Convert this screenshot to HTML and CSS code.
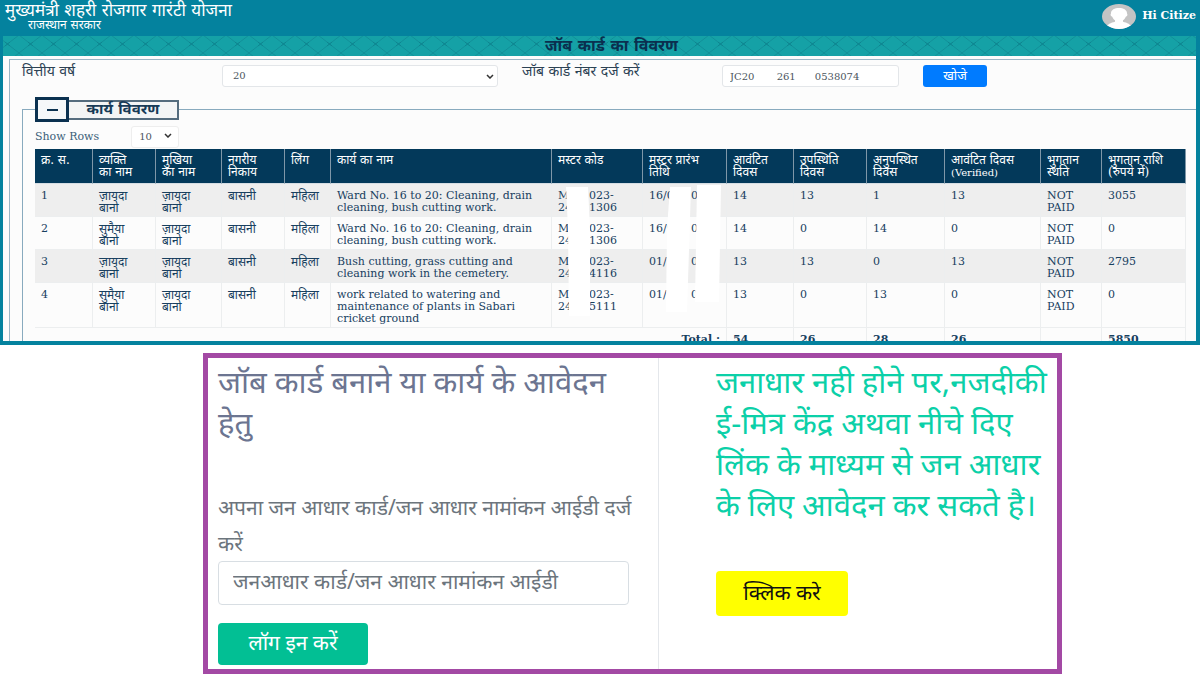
FILE: index.html
```html
<!DOCTYPE html>
<html lang="hi">
<head>
<meta charset="utf-8">
<meta name="viewport" content="width=device-width, initial-scale=1">
<title>जॉब कार्ड का विवरण</title>
<link rel="stylesheet" href="styles.css">
</head>
<body>
<section class="portal">
  <header class="topbar">
    <div class="brand">
      <div class="brand-name">मुख्यमंत्री शहरी रोजगार गारंटी योजना</div>
      <div class="brand-sub">राजस्थान सरकार</div>
    </div>
    <div class="user">
      <svg class="avatar" viewBox="0 0 34 24" preserveAspectRatio="none" aria-hidden="true">
        <defs><clipPath id="face"><ellipse cx="17" cy="12" rx="17" ry="12"/></clipPath></defs>
        <g clip-path="url(#face)">
          <rect width="34" height="24" fill="#c4c4c4"/>
          <path d="M9 9C8.500 2 25.500 2 25 9C26 10 25 12 24 12C23 14 22 15 21 15.500V17C25 18 29 19 30 24H4C5 19 9 18 13 17V15.500C12 15 11 14 10 12C9 12 8 10 9 9Z" fill="#fff"/>
        </g>
      </svg>
      <span class="user-name">Hi Citize</span>
    </div>
  </header>
  <div class="titlebar">
    <svg class="pattern" aria-hidden="true">
      <defs><pattern id="lattice" x="16" width="23" height="18" y="-1" patternUnits="userSpaceOnUse">
        <path d="M0 0L23 18M23 0L0 18" stroke="#118f98" stroke-width="1" fill="none"/>
        <path d="M9 7L14 11M14 7L9 11" stroke="#0d8590" stroke-width="1" fill="none"/>
      </pattern></defs>
      <rect width="100%" height="100%" fill="url(#lattice)"/>
    </svg>
    <h1 class="title">जॉब कार्ड का विवरण</h1>
  </div>
  <main class="content">
    <form class="search">
      <label class="search-label" for="year">वित्तीय वर्ष</label>
      <div class="select-box year-box">
        <select id="year" class="field"><option>20</option></select>
        <svg class="chevron" viewBox="0 0 8 5" aria-hidden="true"><path d="M1 1L4 4L7 1"/></svg>
      </div>
      <label class="search-label" for="card">जॉब कार्ड नंबर दर्ज करें</label>
      <input id="card" class="field" type="text" value="JC20       261      0538074">
      <button class="find" type="button">खोजे</button>
    </form>
    <fieldset class="work">
      <legend class="legend"><button class="toggle" type="button" aria-label="−"><span class="minus"></span></button><span class="legend-text">कार्य विवरण</span></legend>
      <div class="rows-control">
        <label for="rows">Show Rows</label>
        <div class="select-box rows-box">
          <select id="rows" class="field"><option>10</option></select>
          <svg class="chevron" viewBox="0 0 8 5" aria-hidden="true"><path d="M1 1L4 4L7 1"/></svg>
        </div>
      </div>
      <div class="table-wrap">
        <table class="jobs">
          <colgroup><col class="c1"><col class="c2"><col class="c3"><col class="c4"><col class="c5"><col class="c6"><col class="c7"><col class="c8"><col class="c9"><col class="c10"><col class="c11"><col class="c12"><col class="c13"><col class="c14"></colgroup>
          <thead><tr><th>क्र. स.</th><th>व्यक्ति<br>का नाम</th><th>मुखिया<br>का नाम</th><th>नगरीय<br>निकाय</th><th>लिंग</th><th>कार्य का नाम</th><th>मस्टर कोड</th><th>मस्टर प्रारंभ<br>तिथि</th><th>आवंटित<br>दिवस</th><th>उपस्थिति<br>दिवस</th><th>अनुपस्थित<br>दिवस</th><th>आवंटित दिवस<br><span class="latin">(Verified)</span></th><th>भुगतान<br>स्थति</th><th>भुगतान राशि<br>(रुपये में)</th></tr></thead>
          <tbody>
            <tr><td>1</td><td class="hi">ज़ायदा<br>बानो</td><td class="hi">ज़ायदा<br>बानो</td><td class="hi">बासनी</td><td class="hi">महिला</td><td>Ward No. 16 to 20: Cleaning, drain<br>cleaning, bush cutting work.</td><td><div class="code"><span>M<br>24</span><span>023-<br>1306</span></div></td><td><div class="date"><span>16/0</span><span>02</span></div></td><td>14</td><td>13</td><td>1</td><td>13</td><td>NOT<br>PAID</td><td>3055</td></tr>
            <tr><td>2</td><td class="hi">सुमैया<br>बानो</td><td class="hi">ज़ायदा<br>बानो</td><td class="hi">बासनी</td><td class="hi">महिला</td><td>Ward No. 16 to 20: Cleaning, drain<br>cleaning, bush cutting work.</td><td><div class="code"><span>M<br>24</span><span>023-<br>1306</span></div></td><td><div class="date"><span>16/0</span><span>0</span></div></td><td>14</td><td>0</td><td>14</td><td>0</td><td>NOT<br>PAID</td><td>0</td></tr>
            <tr><td>3</td><td class="hi">ज़ायदा<br>बानो</td><td class="hi">ज़ायदा<br>बानो</td><td class="hi">बासनी</td><td class="hi">महिला</td><td>Bush cutting, grass cutting and<br>cleaning work in the cemetery.</td><td><div class="code"><span>M<br>24</span><span>023-<br>4116</span></div></td><td><div class="date"><span>01/</span><span>0</span></div></td><td>13</td><td>13</td><td>0</td><td>13</td><td>NOT<br>PAID</td><td>2795</td></tr>
            <tr><td>4</td><td class="hi">सुमैया<br>बानो</td><td class="hi">ज़ायदा<br>बानो</td><td class="hi">बासनी</td><td class="hi">महिला</td><td>work related to watering and<br>maintenance of plants in Sabari<br>cricket ground</td><td><div class="code"><span>M<br>24</span><span>023-<br>5111</span></div></td><td><div class="date"><span>01/</span><span>0</span></div></td><td>13</td><td>0</td><td>13</td><td>0</td><td>NOT<br>PAID</td><td>0</td></tr>
          </tbody>
          <tfoot><tr><td colspan="8" class="total">Total :</td><td>54</td><td>26</td><td>28</td><td>26</td><td></td><td>5850</td></tr></tfoot>
        </table>
        <svg class="masks" viewBox="0 0 158 132" aria-hidden="true">
          <path d="M2 3H24L26 45V132H5L4 45Z"/><path d="M106 3H127L123 128H102L103 45Z"/><path d="M133 1H157L155 118H131Z"/>
        </svg>
      </div>
    </fieldset>
  </main>
</section>
<section class="login">
  <form class="login-main">
    <h2 class="heading">जॉब कार्ड बनाने या कार्य के आवेदन हेतु</h2>
    <label class="id-label" for="janid">अपना जन आधार कार्ड/जन आधार नामांकन आईडी दर्ज करें</label>
    <input id="janid" class="id-input" type="text" placeholder="जनआधार कार्ड/जन आधार नामांकन आईडी">
    <button class="btn btn-login" type="button">लॉग इन करें</button>
  </form>
  <div class="login-side">
    <p class="notice">जनाधार नही होने पर,नजदीकी ई-मित्र केंद्र अथवा नीचे दिए लिंक के माध्यम से जन आधार के लिए आवेदन कर सकते है।</p>
    <a class="btn btn-apply" href="#">क्लिक करे</a>
  </div>
</section>
</body>
</html>
```
FILE: styles.css
```css
* { box-sizing: border-box; }
body { margin: 0; background: #fff; font-family: "DejaVu Serif", "Noto Sans", serif; font-size: 11px; line-height: 12px; color: #17405f; }
button, input, select { font: inherit; }

.portal { max-height: 345px; overflow: hidden; border: solid #04829e; border-width: 0 4px 4px 3px; background: #fcfcfc; }
.topbar { display: flex; justify-content: space-between; height: 36px; background: #04829e; color: #fff; }
.brand { padding: 2px 0 0 2px; }
.brand-name { font-size: 17px; line-height: 16px; }
.brand-sub { padding-left: 23px; font-size: 12px; line-height: 14px; }
.user { display: flex; align-items: flex-start; gap: 6px; padding-top: 4px; }
.avatar { width: 34px; height: 25px; }
.user-name { padding-top: 6px; font-weight: bold; font-size: 11px; }
.titlebar { position: relative; height: 20px; background: #15a1a6; }
.pattern { position: absolute; inset: 0; width: 100%; height: 100%; }
.title { position: relative; margin: 0; padding-left: 24px; text-align: center; font-size: 16px; line-height: 20px; color: #0a2f4f; }

.content { margin: 3px 0 0 6px; padding: 0 0 0 12px; border: solid #9bb6c6; border-width: 1px 0 0 1px; }
.search { display: grid; grid-template-columns: 176px 276px 176px 177px 64px; column-gap: 24px; align-items: start; height: 37px; padding-top: 5px; }
.search-label { font-size: 14px; line-height: 12px; color: #2c4254; }
.field { width: 100%; height: 22px; padding: 0 7px; border: 1px solid #e3e6e9; border-radius: 3px; background: #fff; color: #4b5560; font-size: 10px; white-space: pre; }
.select-box { position: relative; }
.select-box .field { appearance: none; padding-left: 10px; }
.chevron { position: absolute; right: 4px; top: 9px; width: 8px; height: 5px; fill: none; stroke: #333; stroke-width: 1.500; pointer-events: none; }
.find { height: 22px; padding: 0; border: 0; border-radius: 3px; background: #007bff; color: #fff; font-size: 13px; line-height: 20px; }
.work { min-width: 0; margin: 0; padding: 0 0 0 12px; border: solid #88aabe; border-width: 1px 0 0 1px; }
.legend { display: flex; align-items: center; padding: 0; }
.toggle { display: flex; align-items: center; justify-content: center; width: 34px; height: 25px; padding: 0; border: 3px solid #0b3150; background: #f5f7f9; }
.minus { width: 11px; height: 2px; background: #0b3150; }
.legend-text { width: 110px; height: 20px; border: 2px solid #546b7d; border-left: 0; background: #f3f4f5; text-align: center; font-size: 15px; font-weight: bold; line-height: 15px; color: #173a57; }
.rows-control { display: flex; align-items: center; gap: 32px; height: 27px; padding-top: 3px; color: #3b6079; }
.rows-box { width: 48px; }
.rows-box .field { padding-left: 7px; border-color: #eee; }
.rows-box .chevron { right: 7px; top: 7px; }

.table-wrap { position: relative; margin-right: 10px; }
.jobs { width: 100%; table-layout: fixed; border-collapse: separate; border-spacing: 0; }
.c1 { width: 58px; } .c2 { width: 63px; } .c3 { width: 66px; } .c4 { width: 63px; } .c5 { width: 46px; }
.c6 { width: 221px; } .c7 { width: 91px; } .c8 { width: 84px; } .c9 { width: 67px; } .c10 { width: 73px; }
.c11 { width: 78px; } .c12 { width: 96px; } .c13 { width: 61px; } .c14 { width: 84px; }
.jobs th, .jobs td { padding: 6px 0 2px 6px; border-right: 1px solid #eceeef; border-bottom: 1px solid #eceeef; text-align: left; vertical-align: top; white-space: nowrap; }
.jobs th { padding: 5px 0 4px 6px; border-right-color: #7f97a8; border-bottom-color: #d5dde3; background: #03395a; color: #fff; font-size: 12px; font-weight: normal; }
.jobs .hi { font-size: 12px; }
.latin { font-size: 10px; }
.jobs tbody tr:nth-child(odd) { background: #eee; }
.jobs tfoot td { font-weight: bold; }
.jobs .total { padding-right: 6px; text-align: right; }
.code { display: flex; gap: 20px; }
.code span:first-child { width: 11px; }
.date { display: flex; gap: 20px; }
.date span:first-child { width: 22px; }
.masks { position: absolute; left: 46%; top: 35px; width: 158px; height: 132px; fill: #fff; }

.login { display: grid; grid-template-columns: 451px 1fr; margin: 8px 138px 0 203px; border: 5px solid #a349a4; font-family: "Noto Sans", sans-serif; }
.login-main { display: flex; flex-direction: column; padding: 3px 20px 3px 10px; border-right: 1px solid #e4e7eb; }
.heading, .notice { margin: 0; font-size: 31px; font-weight: normal; line-height: 41px; }
.heading { color: #6c7591; }
.id-label { margin-top: 46px; font-size: 21px; line-height: 36px; color: #6c757d; }
.id-input { width: 100%; max-width: 411px; height: 44px; padding: 0 14px 4px; border: 1px solid #d8dee3; border-radius: 4px; font-size: 21px; color: #6c757d; }
.id-input::placeholder { color: #6c757d; opacity: 1; }
.btn { border: 0; border-radius: 4px; text-align: center; text-decoration: none; font-size: 21px; }
.btn-login { width: 150px; height: 42px; margin: 18px 0 1px; padding: 0 0 4px; background: #02bf94; color: #fff; }
.login-side { display: flex; flex-direction: column; align-items: flex-start; padding: 3px 0 0 57px; }
.notice { color: #0bd0a8; }
.btn-apply { width: 132px; height: 45px; margin-top: 46px; line-height: 42px; background: #ff0; color: #111; }
```
